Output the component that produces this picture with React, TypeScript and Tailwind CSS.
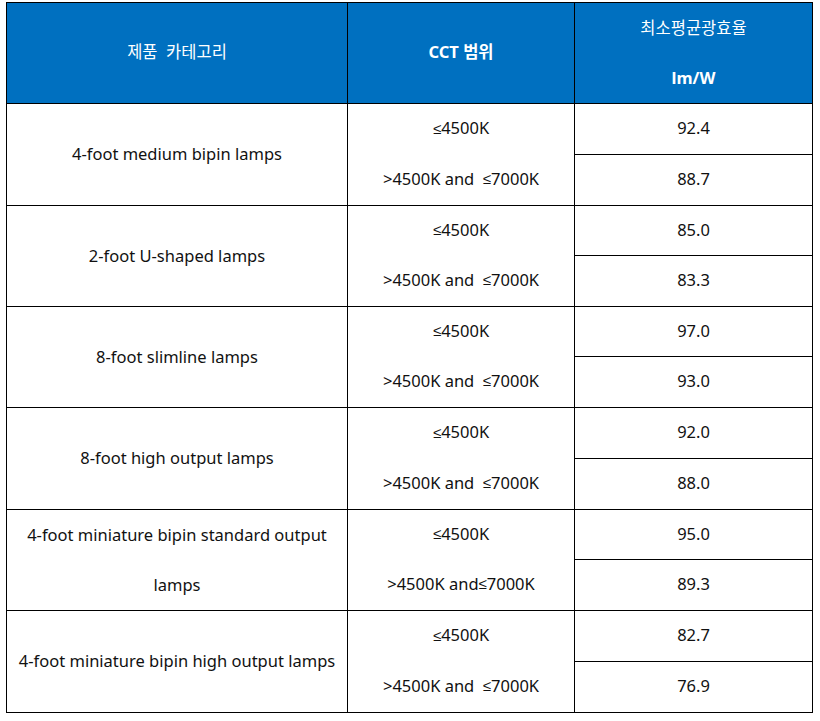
import React from "react";

const groups = [
  { name: ["4-foot medium bipin lamps"], cct2: " and  ", v: ["92.4", "88.7"] },
  { name: ["2-foot U-shaped lamps"], cct2: " and  ", v: ["85.0", "83.3"] },
  { name: ["8-foot slimline lamps"], cct2: " and  ", v: ["97.0", "93.0"] },
  { name: ["8-foot high output lamps"], cct2: " and  ", v: ["92.0", "88.0"] },
  { name: ["4-foot miniature bipin standard output", "lamps"], cct2: " and", v: ["95.0", "89.3"] },
  { name: ["4-foot miniature bipin high output lamps"], cct2: " and  ", v: ["82.7", "76.9"] },
];

function Le() {
  return <span className="font-['Liberation_Sans',sans-serif] text-[15px]">≤</span>;
}

export default function App() {
  return (
    <div className="bg-white w-[820px] h-[721px] pt-[2px] pl-[6px] text-[16.5px] text-[#111] font-['Noto_Sans','Noto_Sans_CJK_KR',sans-serif]">
      <div className="grid grid-cols-[341px_227px_238px] grid-rows-[101px_51px_51px_50px_51px_50px_51px_51px_51px_50px_51px_51px_51px] w-[807px] border-t border-l border-black">
        <div className="bg-[#0070c0] text-white border-r border-b border-black flex items-center justify-center pb-[1px]">
          제품&nbsp; 카테고리
        </div>
        <div className="bg-[#0070c0] text-white font-bold border-r border-b border-black flex items-center justify-center pb-[1px]">
          CCT 범위
        </div>
        <div className="bg-[#0070c0] text-white border-r border-b border-black flex flex-col items-center justify-center leading-[50px] pb-[1px]">
          <span>최소평균광효율</span>
          <span className="font-bold">lm/W</span>
        </div>
        {groups.map((g, i) => (
          <React.Fragment key={i}>
            <div className="row-span-2 border-r border-b border-black flex flex-col items-center justify-center leading-[50px] whitespace-nowrap pb-[1px]">
              {g.name.map((n, j) => (
                <span key={j}>{n}</span>
              ))}
            </div>
            <div className="row-span-2 border-r border-b border-black flex flex-col">
              <div className="flex-1 flex items-center justify-center whitespace-pre pb-[1px]">
                <Le />
                4500K
              </div>
              <div className="flex-1 flex items-center justify-center whitespace-pre pb-[1px]">
                {">4500K"}
                {g.cct2}
                <Le />
                7000K
              </div>
            </div>
            <div className="border-r border-b border-black flex items-center justify-center pb-[1px]">
              {g.v[0]}
            </div>
            <div className="border-r border-b border-black flex items-center justify-center pb-[1px]">
              {g.v[1]}
            </div>
          </React.Fragment>
        ))}
      </div>
    </div>
  );
}
